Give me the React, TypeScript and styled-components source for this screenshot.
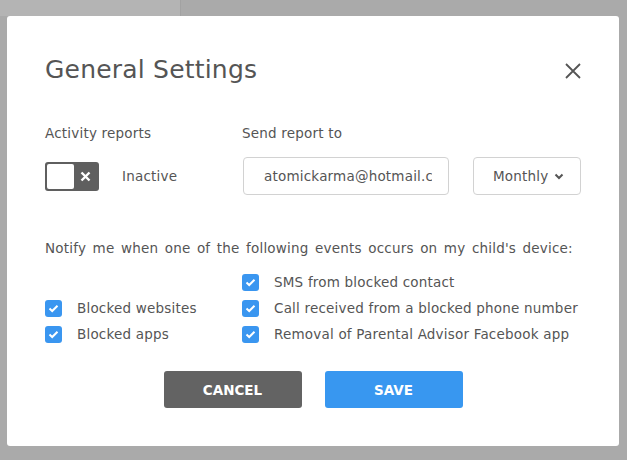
import React, { useState } from 'react';
import styled, { createGlobalStyle } from 'styled-components';

const GlobalStyle = createGlobalStyle`
  html, body {
    margin: 0;
    padding: 0;
    height: 100%;
  }
  body {
    background:
      linear-gradient(to right, #b4b4b4 180px, #a2a2a2 180px, #a2a2a2 181px, transparent 181px) no-repeat 0 0 / 100% 16px,
      #aaaaaa;
    font-family: 'DejaVu Sans', 'Liberation Sans', sans-serif;
    color: #555555;
  }
`;

const Backdrop = styled.div`
  padding: 16px 0 0 7px;
`;

const Modal = styled.div`
  box-sizing: border-box;
  width: 612px;
  height: 430px;
  background: #ffffff;
  border-radius: 3px;
  padding: 38px;
  display: flex;
  flex-direction: column;
  font-size: 13.5px;
  letter-spacing: 0.2px;
`;

const Header = styled.div`
  display: flex;
  justify-content: space-between;
  align-items: center;
  height: 31px;
`;

const Title = styled.h1`
  margin: 0;
  font-size: 25px;
  line-height: 31px;
  font-weight: 400;
  color: #555555;
  letter-spacing: 0.2px;
`;

const CloseButton = styled.button`
  border: 0;
  background: none;
  padding: 0;
  width: 18px;
  height: 18px;
  margin-right: -1px;
  margin-top: 2px;
  cursor: pointer;
  display: flex;
`;

const ReportGrid = styled.div`
  display: grid;
  grid-template-columns: 197px 1fr;
  row-gap: 14px;
  margin-top: 38px;
`;

const FieldLabel = styled.div`
  line-height: 20px;
  color: #555555;
`;

const ToggleRow = styled.div`
  display: flex;
  align-items: center;
  gap: 23px;
  height: 38px;
`;

const Toggle = styled.button<{ $on: boolean }>`
  box-sizing: border-box;
  width: 54px;
  height: 29px;
  border: 0;
  border-radius: 3px;
  padding: 2px;
  background: ${(p) => (p.$on ? '#3a96f0' : '#5f5f5f')};
  display: flex;
  align-items: center;
  flex-direction: ${(p) => (p.$on ? 'row-reverse' : 'row')};
  cursor: pointer;
`;

const Knob = styled.span`
  width: 27px;
  height: 25px;
  border-radius: 2px;
  background: #ffffff;
`;

const ToggleMark = styled.span`
  flex: 1;
  display: flex;
  justify-content: center;
  align-items: center;
`;

const StatusText = styled.span`
  color: #555555;
`;

const SendRow = styled.div`
  display: flex;
  gap: 24px;
  margin-left: 1px;
`;

const EmailInput = styled.input`
  box-sizing: border-box;
  width: 206px;
  height: 38px;
  border: 1px solid #d2d2d2;
  border-radius: 4px;
  padding: 0 16px 0 20px;
  font-family: inherit;
  font-size: 13.5px;
  letter-spacing: 0.2px;
  color: #555555;
  outline: none;
`;

const SelectBox = styled.button`
  box-sizing: border-box;
  width: 108px;
  height: 38px;
  border: 1px solid #d2d2d2;
  border-radius: 4px;
  background: #ffffff;
  font-family: inherit;
  font-size: 13.5px;
  letter-spacing: 0.2px;
  color: #555555;
  display: flex;
  align-items: center;
  gap: 6px;
  padding: 0 0 0 19px;
  cursor: pointer;
`;

const NotifyText = styled.p`
  margin: 43px 0 0;
  line-height: 20px;
  word-spacing: 2px;
  color: #555555;
`;

const EventGrid = styled.div`
  display: grid;
  grid-template-columns: 197px 1fr;
  grid-auto-rows: 26px;
  margin-top: 11px;
`;

const CheckItem = styled.label<{ $col: number; $row: number }>`
  grid-column: ${(p) => p.$col};
  grid-row: ${(p) => p.$row};
  display: flex;
  align-items: center;
  gap: 15px;
  color: #555555;
  cursor: pointer;
`;

const Box = styled.span<{ $checked: boolean }>`
  width: 17px;
  height: 17px;
  border-radius: 3px;
  background: ${(p) => (p.$checked ? '#3a96f0' : '#ffffff')};
  border: ${(p) => (p.$checked ? '0' : '1px solid #c8c8c8')};
  box-sizing: border-box;
  display: flex;
  align-items: center;
  justify-content: center;
  flex-shrink: 0;
`;

const Actions = styled.div`
  display: flex;
  justify-content: center;
  gap: 23px;
  margin-top: 24px;
`;

const ActionButton = styled.button<{ $variant: 'cancel' | 'save' }>`
  width: 138px;
  height: 37px;
  border: 0;
  border-radius: 3px;
  background: ${(p) => (p.$variant === 'save' ? '#3897f0' : '#636363')};
  color: #ffffff;
  font-family: inherit;
  font-size: 13.5px;
  font-weight: 700;
  cursor: pointer;
`;

const events = [
  { label: 'SMS from blocked contact', col: 2, row: 1 },
  { label: 'Blocked websites', col: 1, row: 2 },
  { label: 'Call received from a blocked phone number', col: 2, row: 2 },
  { label: 'Blocked apps', col: 1, row: 3 },
  { label: 'Removal of Parental Advisor Facebook app', col: 2, row: 3 },
];

const App: React.FC = () => {
  const [active, setActive] = useState(false);
  const [checked, setChecked] = useState(events.map(() => true));

  const toggleEvent = (i: number) => {
    setChecked((prev) => prev.map((v, j) => (j === i ? !v : v)));
  };

  return (
    <>
      <GlobalStyle />
      <Backdrop>
        <Modal>
          <Header>
            <Title>General Settings</Title>
            <CloseButton aria-label='Close'>
              <svg width='18' height='18' viewBox='0 0 18 18'>
                <path d='M2 2 L16 16 M16 2 L2 16' stroke='#555' strokeWidth='1.8' />
              </svg>
            </CloseButton>
          </Header>

          <ReportGrid>
            <FieldLabel>Activity reports</FieldLabel>
            <FieldLabel>Send report to</FieldLabel>
            <ToggleRow>
              <Toggle $on={active} onClick={() => setActive(!active)}>
                <Knob />
                <ToggleMark>
                  <svg width='11' height='11' viewBox='0 0 11 11'>
                    <path d='M1.5 1.5 L9.5 9.5 M9.5 1.5 L1.5 9.5' stroke='#fff' strokeWidth='2.4' />
                  </svg>
                </ToggleMark>
              </Toggle>
              <StatusText>{active ? 'Active' : 'Inactive'}</StatusText>
            </ToggleRow>
            <SendRow>
              <EmailInput defaultValue='atomickarma@hotmail.com' />
              <SelectBox>
                Monthly
                <svg width='10' height='8' viewBox='0 0 10 8'>
                  <path d='M1.5 2.5 L5 6 L8.5 2.5' stroke='#555' strokeWidth='2' fill='none' />
                </svg>
              </SelectBox>
            </SendRow>
          </ReportGrid>

          <NotifyText>Notify me when one of the following events occurs on my child's device:</NotifyText>

          <EventGrid>
            {events.map((e, i) => (
              <CheckItem key={e.label} $col={e.col} $row={e.row} onClick={() => toggleEvent(i)}>
                <Box $checked={checked[i]}>
                  {checked[i] && (
                    <svg width='11' height='9' viewBox='0 0 11 9'>
                      <path d='M1.5 4.5 L4.2 7 L9.5 1.8' stroke='#fff' strokeWidth='2' fill='none' />
                    </svg>
                  )}
                </Box>
                {e.label}
              </CheckItem>
            ))}
          </EventGrid>

          <Actions>
            <ActionButton $variant='cancel'>CANCEL</ActionButton>
            <ActionButton $variant='save'>SAVE</ActionButton>
          </Actions>
        </Modal>
      </Backdrop>
    </>
  );
};

export default App;
